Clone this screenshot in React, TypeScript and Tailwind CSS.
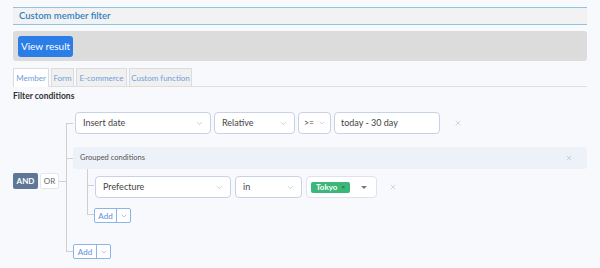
import { ChevronDown, X } from 'lucide-react';

const font = { fontFamily: 'Lato, "Noto Sans", sans-serif' };

// Tree connector: left cell with an elbow line, content on the right
const Branch = ({ first, last, y, pb = 0, children }: { first?: boolean; last?: boolean; y: number; pb?: number; children: React.ReactNode }) => (
    <div className="flex">
        <div className="w-[7px] flex flex-col shrink-0">
            <div className={`border-b border-[#cfcfcf] ${first ? '' : 'border-l'}`} style={{ height: y }} />
            <div className={`flex-1 border-[#cfcfcf] ${last ? '' : 'border-l'}`} />
        </div>
        <div className="flex-1 min-w-0" style={{ paddingBottom: pb }}>{children}</div>
    </div>
);

const Select = ({ label, w }: { label: string; w: number }) => (
    <div
        className="h-[22px] shrink-0 flex items-center justify-between pl-[7px] pr-[6px] bg-white border border-[#c8d2e6] rounded-[4px] text-[9px] text-[#444]"
        style={{ width: w }}
    >
        <span>{label}</span>
        <ChevronDown size={9} strokeWidth={1.5} className="text-[#a3aec4]" />
    </div>
);

const AddButton = ({ w }: { w: number }) => (
    <div className="flex h-[15px] border border-[#8db3ec] rounded-[2px] bg-white text-[8px] text-[#5b8fe0] w-fit">
        <div className="flex items-center justify-center border-r border-[#8db3ec]" style={{ width: w }}>Add</div>
        <div className="w-[13px] flex items-center justify-center">
            <ChevronDown size={8} strokeWidth={1.5} />
        </div>
    </div>
);

const Remove = () => <X size={8} strokeWidth={1.5} className="text-[#a5b0c6]" />;

export default function App() {
    const tabs = [
        { label: 'Member', w: 36 },
        { label: 'Form', w: 23 },
        { label: 'E-commerce', w: 51 },
        { label: 'Custom function', w: 63 },
    ];

    return (
        <div className="min-h-[268px] bg-[#f8f9fc] px-[13px] pt-[7px]" style={font}>
            {/* Header */}
            <div className="h-[18px] flex items-center pl-[6px] bg-[#f2f2f2] border-y border-[#8fc4e0] text-[9.5px] font-semibold text-[#3381bf]">
                Custom member filter
            </div>

            {/* Action bar */}
            <div className="mt-[6px] h-[30px] flex items-center px-[5px] bg-[#dcdcdc] rounded-[3px]">
                <button className="h-[21px] w-[55px] rounded-[3px] bg-[#2b7de8] text-white text-[10px]">View result</button>
            </div>

            {/* Tabs */}
            <div className="mt-[7px] flex gap-[2px] border-b border-[#dedede]">
                {tabs.map((t, i) => (
                    <div
                        key={t.label}
                        className={`shrink-0 whitespace-nowrap flex items-center justify-center text-[8px] text-[#6f9ed8] border border-b-0 border-[#dcdcdc] ${i === 0 ? 'bg-white -mb-px h-[19px]' : 'bg-[#f0f0f0] h-[18px]'}`}
                        style={{ width: t.w }}
                    >
                        {t.label}
                    </div>
                ))}
            </div>

            <div className="mt-[3px] text-[8.5px] font-bold text-[#333] leading-[12px]">Filter conditions</div>

            {/* Condition tree */}
            <div className="mt-[10px] flex items-start">
                <div className="mt-[61px] flex items-center">
                    <div className="w-[25px] h-[16px] flex items-center justify-center rounded-[2px] bg-[#5e7797] text-white text-[8px] font-bold">AND</div>
                    <div className="ml-[2px] w-[19px] h-[16px] flex items-center justify-center rounded-[2px] bg-white border border-[#e3e6ec] text-[#666] text-[8px]">OR</div>
                    <div className="w-[7px] h-px bg-[#cfcfcf]" />
                </div>

                <div className="flex-1 flex flex-col">
                    <Branch first y={12} pb={13}>
                        <div className="ml-[2px] flex items-center gap-[3px]">
                            <Select label="Insert date" w={136} />
                            <Select label="Relative" w={81} />
                            <div className="h-[22px] w-[33px] shrink-0 flex items-center justify-between pl-[5px] pr-[4px] bg-white border border-[#c8d2e6] rounded-[4px] text-[8.5px] text-[#444]">
                                <span>&gt;=</span>
                                <ChevronDown size={8} strokeWidth={1.5} className="text-[#a3aec4]" />
                            </div>
                            <div className="h-[22px] w-[106px] flex items-center px-[6px] bg-white border border-[#c8d2e6] rounded-[4px] text-[9px] text-[#444]">
                                today - 30 day
                            </div>
                            <div className="ml-[11px]"><Remove /></div>
                        </div>
                    </Branch>

                    <Branch y={12} pb={21}>
                        <div className="h-[22px] flex items-center justify-between pl-[7px] pr-[14px] bg-[#edf1f8] rounded-[3px] text-[7.5px] text-[#555]">
                            <span>Grouped conditions</span>
                            <Remove />
                        </div>
                        <div className="ml-[14px] flex flex-col">
                            <div className="h-[7px] border-l border-[#cfcfcf]" />
                            <Branch y={10} pb={10}>
                                <div className="ml-[1px] flex items-center gap-[4px]">
                                    <Select label="Prefecture" w={136} />
                                    <Select label="in" w={67} />
                                    <div className="h-[22px] w-[71px] flex items-center justify-between pl-[4px] pr-[9px] bg-white border border-[#dde3ee] rounded-[4px]">
                                        <div className="w-[39px] h-[11px] flex items-center justify-between pl-[5px] pr-[5px] rounded-[2px] bg-[#3cb679] text-white text-[8px] font-bold">
                                            <span>Tokyo</span>
                                            <span className="text-[6px] leading-none text-[#1f6b45]">×</span>
                                        </div>
                                        <div className="w-0 h-0 border-x-[3px] border-t-[3px] border-x-transparent border-t-[#777]" />
                                    </div>
                                    <div className="ml-[8px]"><Remove /></div>
                                </div>
                            </Branch>
                            <Branch last y={7}>
                                <AddButton w={22} />
                            </Branch>
                        </div>
                    </Branch>

                    <Branch last y={8}>
                        <AddButton w={23} />
                    </Branch>
                </div>
            </div>
        </div>
    );
}
